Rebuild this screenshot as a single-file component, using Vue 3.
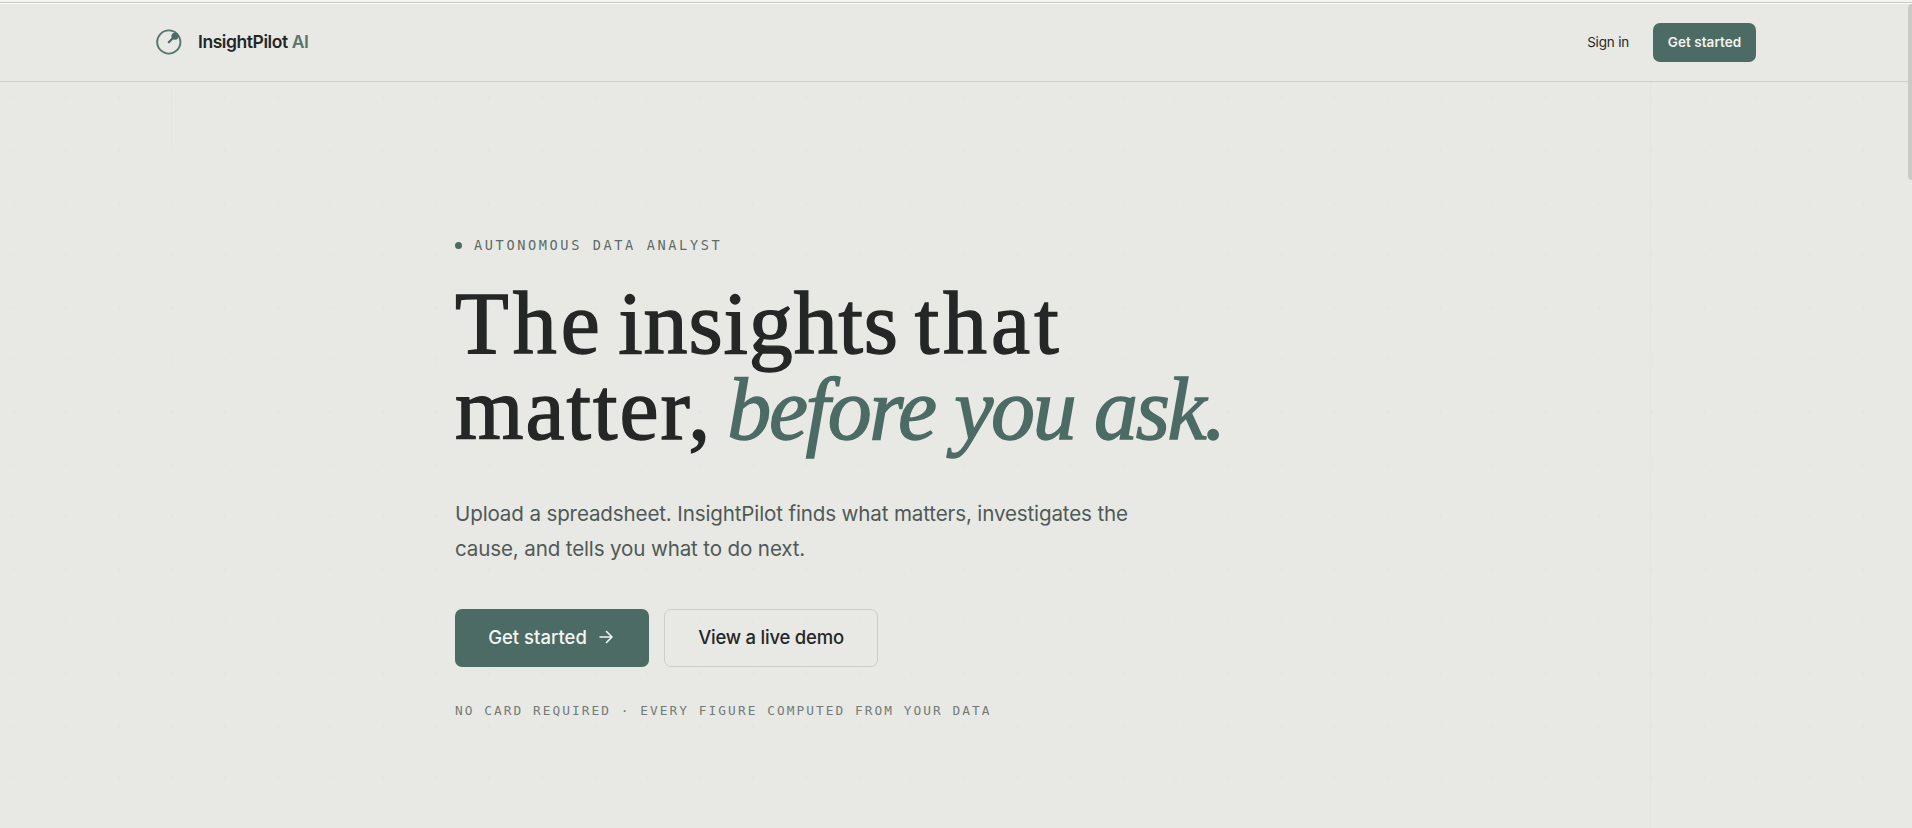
<template>
  <div class="page">
    <header class="nav">
      <div class="nav-inner">
        <a class="brand">
          <svg class="logo" viewBox="0 0 26 26" width="26" height="26" fill="none">
            <circle cx="12.8" cy="13" r="11.6" stroke="#55756d" stroke-width="1.9" />
            <path d="M12.8 13.2 18 8" stroke="#4d6b65" stroke-width="2.2" stroke-linecap="round" />
            <circle cx="18.9" cy="7.2" r="3.5" fill="#4d6b65" />
          </svg>
          <span class="brand-name">InsightPilot <em>AI</em></span>
        </a>
        <div class="nav-actions">
          <a class="sign-in">Sign in</a>
          <button class="btn-small">Get started</button>
        </div>
      </div>
    </header>

    <main class="hero">
      <div class="hero-inner">
        <p class="eyebrow"><span class="dot"></span><span>AUTONOMOUS DATA ANALYST</span></p>
        <h1 class="title">
          <span class="line"><span class="the">The</span> <span class="insights">insights</span> <span class="that">that</span></span>
          <span class="line"><span class="matter">matter,</span> <em>before you ask.</em></span>
        </h1>
        <p class="lead">
          Upload a spreadsheet. InsightPilot finds what matters, investigates the<br />
          cause, and tells you what to do next.
        </p>
        <div class="actions">
          <button class="btn primary">
            <span>Get started</span>
            <svg viewBox="0 0 14 14" width="14" height="14" fill="none" stroke="currentColor" stroke-width="1.6"
              stroke-linecap="round" stroke-linejoin="round">
              <path d="M1 7h12M7.5 1.5 13 7l-5.5 5.5" />
            </svg>
          </button>
          <button class="btn ghost"><span>View a live demo</span></button>
        </div>
        <p class="note">NO CARD REQUIRED · EVERY FIGURE COMPUTED FROM YOUR DATA</p>
      </div>
    </main>
    <div class="scroll-thumb"></div>
  </div>
</template>

<script setup>
</script>

<style>
body {
  margin: 0;
  background: #e8e9e4;
}
</style>

<style scoped>
.page {
  position: relative;
  height: 828px;
  box-sizing: border-box;
  overflow: hidden;
  background: #e8e9e4;
  border-top: 2px solid #f4f5f2;
  font-family: "Inter", "Liberation Sans", sans-serif;
  color: #252726;
}

.nav {
  box-sizing: border-box;
  height: 80px;
  border-top: 1px solid #c6c8c4;
  border-bottom: 1px solid #cdd0ca;
  box-shadow: inset 0 1px 0 #fbfcfa;
}

.nav-inner {
  display: flex;
  align-items: center;
  justify-content: space-between;
  height: 78px;
  width: 1600px;
  margin: 0 auto;
}

.brand {
  display: flex;
  align-items: center;
  gap: 16px;
}

.brand-name {
  padding-bottom: 2px;
  font-size: 17.5px;
  font-weight: 600;
  letter-spacing: -0.43px;
}

.brand-name em {
  font-style: normal;
  color: #55756d;
}

.nav-actions {
  display: flex;
  align-items: center;
  gap: 24px;
}

.sign-in {
  font-size: 13.5px;
  letter-spacing: -0.2px;
}

.btn-small {
  width: 103px;
  height: 39px;
  padding: 0;
  border: none;
  border-radius: 7px;
  background: #4d6b65;
  color: #f1f4ef;
  font: 600 13.5px "Inter", "Liberation Sans", sans-serif;
  letter-spacing: 0.05px;
}

/* faint dot grid plus two guide lines */
.hero {
  height: 746px;
  background-image:
    linear-gradient(#e4e5e0, #e4e5e0),
    linear-gradient(#e4e5e0, #e4e5e0),
    radial-gradient(circle at 2px 2px, #e5e6e1 1px, transparent 2px);
  background-size: 1px 60px, 1px 100%, 52.85px 52.3px;
  background-position: 171px 4px, 1650px 0, 11.4px 14.4px;
  background-repeat: no-repeat, no-repeat, repeat;
}

.hero-inner {
  width: 1002px;
  margin: 0 auto;
  padding-top: 152px;
}

.eyebrow {
  display: flex;
  align-items: center;
  gap: 12px;
  margin: 0;
  height: 22px;
  font: 13.6px "DejaVu Sans Mono", monospace;
  letter-spacing: 2.61px;
  color: #5d6b67;
}

.dot {
  width: 7px;
  height: 7px;
  border-radius: 50%;
  background: #4d6b65;
}

.title {
  margin: 25px 0 0;
  font: 400 88px/86px "Liberation Serif", serif;
  -webkit-text-stroke: 1.4px currentColor;
}

.line {
  display: block;
  white-space: nowrap;
}

.the {
  letter-spacing: 4px;
  margin-right: -7.5px;
}

.insights {
  letter-spacing: 0.85px;
  margin-right: -6.3px;
}

.that {
  letter-spacing: 4px;
}

.matter {
  letter-spacing: 2px;
  margin-right: -7px;
}

.title em {
  color: #4d6b65;
  letter-spacing: -2.35px;
}

.lead {
  margin: 43px 0 0;
  font-size: 20.6px;
  line-height: 35px;
  letter-spacing: -0.15px;
  color: #515957;
  white-space: nowrap;
}

.actions {
  display: flex;
  gap: 15px;
  margin-top: 43px;
}

.btn {
  display: flex;
  align-items: center;
  justify-content: center;
  gap: 12px;
  box-sizing: border-box;
  height: 58px;
  padding: 0 0 2px;
  border-radius: 7px;
  font: 500 18.5px "Inter", "Liberation Sans", sans-serif;
  white-space: nowrap;
}

.primary {
  width: 194px;
  padding-right: 3px;
  border: none;
  background: #4d6b65;
  color: #f4f6f2;
}

.ghost {
  width: 214px;
  border: 1px solid #cbcec8;
  background: transparent;
  color: #252726;
  letter-spacing: -0.23px;
}

.note {
  margin: 34px 0 0;
  font: 12.8px/20px "DejaVu Sans Mono", monospace;
  letter-spacing: 2.05px;
  color: #727b78;
}

.scroll-thumb {
  position: absolute;
  top: 2px;
  right: 0;
  width: 4px;
  height: 176px;
  border-radius: 4px 0 0 4px;
  background: #c9cac6;
}
</style>
